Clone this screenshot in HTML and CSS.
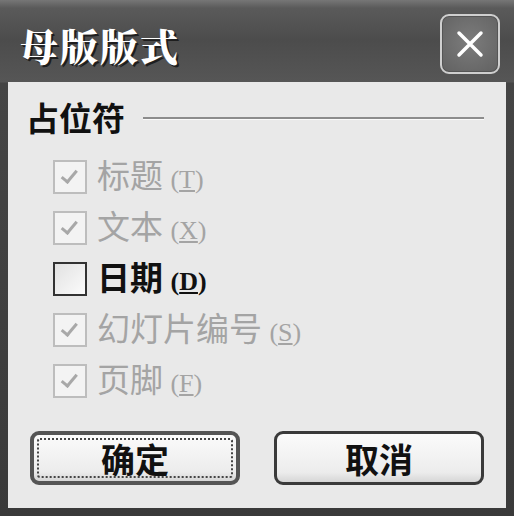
FILE: index.html
```html
<!DOCTYPE html>
<html lang="zh-CN">
<head>
    <meta charset="UTF-8">
    <title>母版版式</title>
    <link rel="stylesheet" href="styles.css">
</head>
<body>
    <div class="window">
        <div class="titlebar">
            <span class="title">母版版式</span>
            <button class="close-btn" aria-label="关闭">
                <svg width="34" height="34" viewBox="0 0 34 34">
                    <path d="M6 6 L28 28 M28 6 L6 28" stroke="#fff" stroke-width="3.5" stroke-linecap="round"/>
                </svg>
            </button>
        </div>
        <div class="client">
            <div class="group-head">
                <span class="group-label">占位符</span>
                <span class="group-line"></span>
            </div>

            <div class="row disabled">
                <span class="box checked"></span>
                <span class="label">标题 <span class="key">(<u>T</u>)</span></span>
            </div>
            <div class="row disabled">
                <span class="box checked"></span>
                <span class="label">文本 <span class="key">(<u>X</u>)</span></span>
            </div>
            <div class="row">
                <span class="box"></span>
                <span class="label strong">日期 <span class="key">(<u>D</u>)</span></span>
            </div>
            <div class="row disabled">
                <span class="box checked"></span>
                <span class="label">幻灯片编号 <span class="key">(<u>S</u>)</span></span>
            </div>
            <div class="row disabled">
                <span class="box checked"></span>
                <span class="label">页脚 <span class="key">(<u>F</u>)</span></span>
            </div>

            <div class="buttons">
                <button class="btn default"><span class="focus">确定</span></button>
                <button class="btn">取消</button>
            </div>
        </div>
    </div>
</body>
</html>
```

FILE: styles.css
```css
body {
    margin: 0;
    width: 514px;
    height: 516px;
    overflow: hidden;
    background: #3c3c3c;
    font-family: "Noto Sans CJK SC", "Noto Sans", sans-serif;
}
.window {
    height: 516px;
    box-sizing: border-box;
    padding: 0 8px 8px;
    display: flex;
    flex-direction: column;
    background: linear-gradient(#767676 0, #5a5a5a 8px, #4c4c4c 40px, #565656 82px, #454545 83px, #3a3a3a 100%);
}
.titlebar {
    height: 82px;
    display: flex;
    align-items: center;
    justify-content: space-between;
    padding: 0 6px 0 12px;
}
.title {
    color: #fff;
    font-family: "Noto Serif CJK SC", "Noto Sans CJK SC", serif;
    font-weight: 900;
    font-size: 38px;
    letter-spacing: 2px;
    text-shadow: 2px 2px 0 #1e1e1e, 1px 1px 0 #2a2a2a;
    margin-top: 6px;
}
.close-btn {
    width: 60px;
    height: 60px;
    margin-top: 6px;
    border: 2px solid #cfcfcf;
    border-radius: 9px;
    background: radial-gradient(circle at 50% 45%, #7c7c7c, #616161);
    box-shadow: inset 0 0 0 1px #555;
    display: flex;
    align-items: center;
    justify-content: center;
    padding: 0;
}
.client {
    flex: 1;
    background: #e9e9e9;
    padding: 18px 22px 0 18px;
    display: flex;
    flex-direction: column;
}
.group-head {
    height: 35px;
    display: flex;
    align-items: center;
    gap: 18px;
    margin-bottom: 16px;
}
.group-label {
    font-size: 33px;
    font-weight: 700;
    color: #111;
    line-height: 35px;
}
.group-line {
    flex: 1;
    height: 2px;
    background: #8c8c8c;
    border-bottom: 1px solid #fafafa;
    margin-top: 2px;
}
.row {
    height: 51px;
    display: flex;
    align-items: center;
    gap: 10px;
    padding-left: 27px;
}
.box {
    width: 30px;
    height: 30px;
    border: 2px solid #333;
    background: linear-gradient(135deg, #e2e2e2, #fbfbfb);
    position: relative;
    flex: none;
}
.disabled .box {
    border-color: #bdbdbd;
    background: #f3f3f3;
}
.box.checked::after {
    content: "";
    position: absolute;
    left: 16px;
    top: 4px;
    width: 6px;
    height: 13px;
    border: solid #a8a8a8;
    border-width: 0 3px 3px 0;
    transform: rotate(40deg);
    transform-origin: 0 0;
}
.label {
    font-size: 33px;
    line-height: 40px;
    color: #111;
    white-space: nowrap;
}
.label.strong {
    font-weight: 700;
}
.disabled .label {
    color: #a4a4a4;
}
.key {
    font-family: "Liberation Serif", serif;
    font-size: 26px;
}
.buttons {
    display: flex;
    gap: 34px;
    padding-left: 4px;
    margin-top: 25px;
}
.btn {
    width: 210px;
    height: 54px;
    border: 3px solid #3a3a3a;
    border-radius: 9px;
    background: linear-gradient(#fbfbfb, #ececec 80%, #d6d6d6);
    font-family: "Noto Sans CJK SC", sans-serif;
    font-size: 34px;
    font-weight: 700;
    color: #111;
    padding: 0;
    display: flex;
    align-items: center;
    justify-content: center;
}
.btn.default {
    border: 4px solid #555;
    padding: 3px;
}
.focus {
    flex: 1;
    align-self: stretch;
    display: flex;
    align-items: center;
    justify-content: center;
    border: 2px dotted #444;
    border-radius: 3px;
}
```
